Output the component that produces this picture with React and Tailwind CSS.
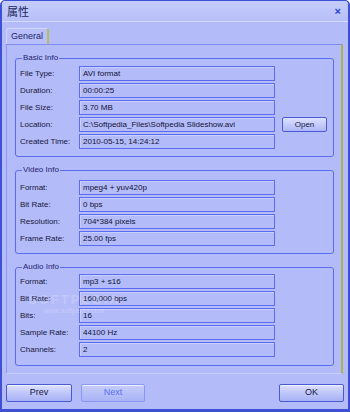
import React from "react";

const font = { fontFamily: '"Liberation Sans", Arial, sans-serif' };

function Row({ label, value, extra }) {
  return (
    <div className="flex items-center">
      <div className="w-[59px] text-[8px] text-[#14173a] leading-none">{label}</div>
      <div className="w-[196px] h-[15px] border border-[#5b6cf0] shadow-[inset_1px_1px_0_#c9cffc] flex items-center pl-[3px] text-[8px] text-[#101335] leading-none">
        {value}
      </div>
      {extra}
    </div>
  );
}

function Group({ title, children, className = "" }) {
  return (
    <fieldset className={`border border-[#5b6cf0] rounded-[3px] mx-0 px-[4px] ${className}`}>
      <legend className="ml-[2px] px-[1px] text-[8px] leading-none text-[#1c2470]">{title}</legend>
      {children}
    </fieldset>
  );
}

function Btn({ children, disabled, w }) {
  return (
    <div
      className={`${w} h-[18px] rounded-[2px] border ${disabled ? "border-[#8a97f2] text-[#5b70f4] bg-gradient-to-b from-[#c6cdfb] to-[#a9b3f6]" : "border-[#4a5ad4] text-[#15183f] bg-gradient-to-b from-[#dde1fd] via-[#bfc6fa] to-[#a8b2f5]"} flex items-center justify-center text-[9px] shadow-[inset_0_1px_0_#eef0ff]`}
    >
      {children}
    </div>
  );
}

export default function App() {
  return (
    <div style={font} className="w-[350px] h-[412px] bg-[#b4bbf9] border-x-2 border-b-[3px] border-t border-[#3e50d6] rounded-t-[5px] flex flex-col overflow-hidden relative">
      {/* title bar */}
      <div className="h-[21px] shrink-0 flex items-center justify-between px-[4px] bg-gradient-to-b from-[#c5ccfb] to-[#b7bff9] border-b border-[#d6dbfd]">
        <span className="text-[11px] text-[#1a1f5a] pl-[1px]" style={{ fontFamily: '"Noto Sans CJK SC", sans-serif' }}>属性</span>
        <span className="text-[11px] font-bold text-[#2c3fd8] pr-[3px] leading-none">×</span>
      </div>

      {/* tabs */}
      <div className="px-[4px] pt-[6px] flex flex-col">
        <div className="flex">
          <div className="w-[43px] h-[16px] border-t border-l border-r-2 border-[#d2d7fd] border-r-[#b7bd5a] rounded-t-[3px] flex items-center justify-center text-[9px] text-[#1c2470] bg-[#b8bffa]">
            General
          </div>
        </div>
        <div className="w-[337px] h-[330px] border border-[#8b97f4] border-t-[#7f8cf2] border-r-2 border-r-[#aab34c] border-b-[#c7cdfc] pl-[8px] pr-[7px] pt-[9px] flex flex-col">
          <Group title="Basic Info" className="pb-[7px]">
            <div className="flex flex-col gap-[2px] mt-[4px]">
              <Row label="File Type:" value="AVI format" />
              <Row label="Duration:" value="00:00:25" />
              <Row label="File Size:" value="3.70 MB" />
              <Row
                label="Location:"
                value="C:\Softpedia_Files\Softpedia Slideshow.avi"
                extra={
                  <div className="ml-[7px] w-[45px] h-[15px] rounded-[2px] border border-[#4a5ad4] bg-gradient-to-b from-[#dde1fd] to-[#aeb7f6] flex items-center justify-center text-[8px] text-[#15183f]">
                    Open
                  </div>
                }
              />
              <Row label="Created Time:" value="2010-05-15, 14:24:12" />
            </div>
          </Group>

          <Group title="Video Info" className="mt-[9px] pb-[7px]">
            <div className="flex flex-col gap-[2px] mt-[6px]">
              <Row label="Format:" value="mpeg4 + yuv420p" />
              <Row label="Bit Rate:" value="0 bps" />
              <Row label="Resolution:" value="704*384 pixels" />
              <Row label="Frame Rate:" value="25.00 fps" />
            </div>
          </Group>

          <Group title="Audio Info" className="mt-[9px] pb-[8px]">
            <div className="flex flex-col gap-[2px] mt-[3px]">
              <Row label="Format:" value="mp3 + s16" />
              <Row label="Bit Rate:" value="160,000 bps" />
              <Row label="Bits:" value="16" />
              <Row label="Sample Rate:" value="44100 Hz" />
              <Row label="Channels:" value="2" />
            </div>
          </Group>
        </div>
      </div>

      {/* bottom buttons */}
      <div className="flex items-center px-[4px] mt-[10px]">
        <Btn w="w-[66px]">Prev</Btn>
        <div className="ml-[9px]">
          <Btn w="w-[64px]" disabled>Next</Btn>
        </div>
        <div className="ml-auto">
          <Btn w="w-[65px]">OK</Btn>
        </div>
      </div>

      <div className="absolute left-[26px] top-[289px] text-[13px] tracking-[2px] text-white/20 font-bold pointer-events-none">SOFTPEDIA</div>
      <div className="absolute left-[42px] top-[305px] text-[7px] text-white/25 pointer-events-none">www.softpedia.com</div>
    </div>
  );
}
